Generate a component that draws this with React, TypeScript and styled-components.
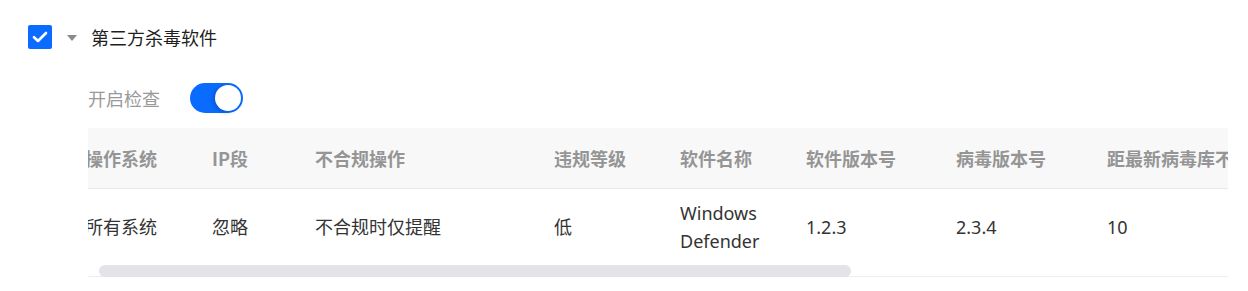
import React, { useLayoutEffect, useRef } from "react";
import styled, { createGlobalStyle } from "styled-components";

const Global = createGlobalStyle`
  html, body { margin: 0; padding: 0; background: #fff; }
  body {
    font-family: "Noto Sans", "Noto Sans CJK SC", sans-serif;
    -webkit-font-smoothing: antialiased;
  }
`;

const Page = styled.div`
  width: 1248px;
  height: 291px;
  box-sizing: border-box;
  padding: 25px 20px 0 28px;
  overflow: hidden;
`;

const TitleRow = styled.div`
  display: flex;
  align-items: center;
  height: 24px;
`;

const CheckBox = styled.span`
  width: 24px;
  height: 24px;
  background: #0a6cff;
  border-radius: 2px;
  display: flex;
  align-items: center;
  justify-content: center;
  flex: none;
`;

const Caret = styled.span`
  margin-left: 15px;
  width: 0;
  height: 0;
  border-left: 5px solid transparent;
  border-right: 5px solid transparent;
  border-top: 6px solid #8a8a8a;
  margin-top: 1px;
`;

const Title = styled.span`
  margin-left: 14px;
  font-family: "Noto Sans CJK SC", sans-serif;
  font-size: 18px;
  line-height: 24px;
  color: #1f1f1f;
`;

const Body = styled.div`
  padding-left: 60px;
`;

const ToggleRow = styled.div`
  margin-top: 34px;
  display: flex;
  align-items: center;
  height: 30px;
  gap: 30px;
`;

const Label = styled.span`
  font-family: "Noto Sans CJK SC", sans-serif;
  font-size: 18px;
  color: #999;
  line-height: 30px;
`;

const Switch = styled.span<{ $on: boolean }>`
  width: 53px;
  height: 30px;
  border-radius: 15px;
  box-sizing: border-box;
  padding: 2px;
  background: ${(p) => (p.$on ? "#0a6cff" : "#ccc")};
  display: flex;
  justify-content: ${(p) => (p.$on ? "flex-end" : "flex-start")};
  align-items: center;
`;

const Knob = styled.span`
  width: 26px;
  height: 26px;
  border-radius: 50%;
  background: #fff;
  box-shadow: -2px 1px 4px rgba(0, 40, 120, 0.35);
`;

const TableWrap = styled.div`
  margin-top: 15px;
  width: 1140px;
`;

const Viewport = styled.div`
  width: 100%;
  overflow: hidden;
`;

const Table = styled.table`
  border-collapse: collapse;
  table-layout: fixed;
  width: 1728px;
  font-size: 18px;
`;

const Th = styled.th`
  height: 60px;
  padding: 0 16px;
  box-sizing: border-box;
  background: #f8f8f9;
  border-bottom: 1px solid #e6e9f0;
  text-align: left;
  font-family: "Noto Sans CJK SC", sans-serif;
  font-weight: 700;
  color: #959595;
  white-space: nowrap;
  overflow: hidden;
  vertical-align: middle;
`;

const Td = styled.td`
  padding: 10px 16px;
  line-height: 28px;
  text-align: left;
  color: #333;
  vertical-align: middle;
  font-family: "Noto Sans", "Noto Sans CJK SC", sans-serif;
`;

const Track = styled.div`
  position: relative;
  height: 11px;
  border-bottom: 1px solid #eeeeee;
`;

const Thumb = styled.div`
  position: absolute;
  top: 0;
  left: 11px;
  width: 752px;
  height: 12px;
  border-radius: 6px;
  background: #e3e3e8;
`;

const columns = [
  { title: "操作系统", width: 127, value: "所有系统" },
  { title: "IP段", width: 103, value: "忽略" },
  { title: "不合规操作", width: 239, value: "不合规时仅提醒" },
  { title: "违规等级", width: 126, value: "低" },
  { title: "软件名称", width: 126, value: "Windows Defender" },
  { title: "软件版本号", width: 150, value: "1.2.3" },
  { title: "病毒版本号", width: 151, value: "2.3.4" },
  { title: "距最新病毒库不合规天数", width: 260, value: "10" },
  { title: "检查周期", width: 200, value: "每天" },
  { title: "操作", width: 246, value: "编辑" },
];

export default function App() {
  const vp = useRef<HTMLDivElement>(null);
  useLayoutEffect(() => {
    if (vp.current) vp.current.scrollLeft = 19;
  }, []);
  return (
    <>
      <Global />
      <Page>
        <TitleRow>
          <CheckBox>
            <svg width="16" height="12" viewBox="0 0 16 12">
              <path d="M2 6.2 L6 10 L14 2" stroke="#fff" strokeWidth="2.6" fill="none" strokeLinecap="round" strokeLinejoin="round" />
            </svg>
          </CheckBox>
          <Caret />
          <Title>第三方杀毒软件</Title>
        </TitleRow>
        <Body>
          <ToggleRow>
            <Label>开启检查</Label>
            <Switch $on>
              <Knob />
            </Switch>
          </ToggleRow>
          <TableWrap>
            <Viewport ref={vp}>
              <Table>
                <colgroup>
                  {columns.map((c) => (
                    <col key={c.title} style={{ width: c.width }} />
                  ))}
                </colgroup>
                <thead>
                  <tr>
                    {columns.map((c) => (
                      <Th key={c.title}>{c.title}</Th>
                    ))}
                  </tr>
                </thead>
                <tbody>
                  <tr>
                    {columns.map((c) => (
                      <Td key={c.title}>{c.value}</Td>
                    ))}
                  </tr>
                </tbody>
              </Table>
            </Viewport>
            <Track>
              <Thumb />
            </Track>
          </TableWrap>
        </Body>
      </Page>
    </>
  );
}
